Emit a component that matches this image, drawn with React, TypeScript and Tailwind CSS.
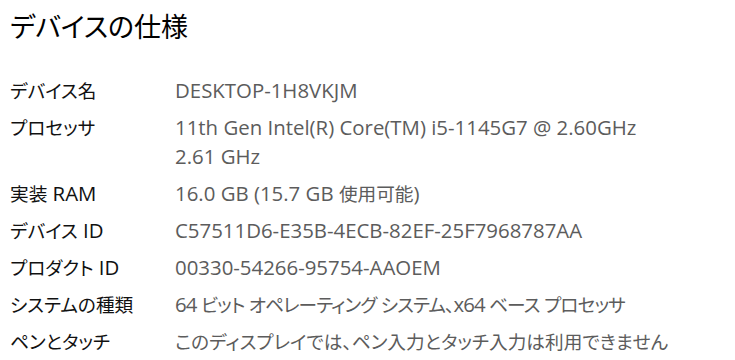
const rows: { label: string; value: string[]; tight?: boolean }[] = [
  { label: 'デバイス名', value: ['DESKTOP-1H8VKJM'] },
  { label: 'プロセッサ', value: ['11th Gen Intel(R) Core(TM) i5-1145G7 @ 2.60GHz', '2.61 GHz'] },
  { label: '実装 RAM', value: ['16.0 GB (15.7 GB 使用可能)'] },
  { label: 'デバイス ID', value: ['C57511D6-E35B-4ECB-82EF-25F7968787AA'] },
  { label: 'プロダクト ID', value: ['00330-54266-95754-AAOEM'] },
  { label: 'システムの種類', value: ['64 ビット オペレーティング システム、x64 ベース プロセッサ'], tight: true },
  { label: 'ペンとタッチ', value: ['このディスプレイでは、ペン入力とタッチ入力は利用できません'] },
];

// 和文は欧文より少し小さく組む（Yu Gothic UI + Segoe UI の見た目に寄せる）
function Mixed({ text }: { text: string }) {
  const parts = text.split(/([\u3000-\u30ff\u4e00-\u9fff]+)/);
  return (
    <>
      {parts.map((p, i) =>
        i % 2 === 1 ? (
          <span key={i} className="text-[0.915em]">{p}</span>
        ) : (
          <span key={i}>{p}</span>
        )
      )}
    </>
  );
}

export default function App() {
  return (
    <div
      className="w-[735px] h-[360px] overflow-hidden bg-white pl-[10px] pt-[7px] [font-feature-settings:'palt']"
      style={{ fontFamily: '"Open Sans", "Noto Sans CJK JP", sans-serif' }}
    >
      <h1 className="text-[27px] leading-[40px] font-normal text-black">デバイスの仕様</h1>

      <div className="mt-[29px] grid grid-cols-[165px_1fr] gap-y-[8px] text-[20.4px] leading-[29px]">
        {rows.map((r) => (
          <div key={r.label} className="contents">
            <div className="text-[#111] whitespace-nowrap">
              <Mixed text={r.label} />
            </div>
            <div className={r.tight ? 'text-[#5c5c5c] tracking-[-0.9px]' : 'text-[#5c5c5c]'}>
              {r.value.map((line) => (
                <div key={line} className="whitespace-nowrap">
                  <Mixed text={line} />
                </div>
              ))}
            </div>
          </div>
        ))}
      </div>
    </div>
  );
}
